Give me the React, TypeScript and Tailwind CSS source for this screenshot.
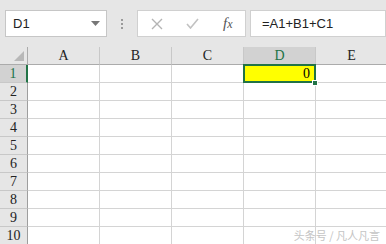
const cols = ['A', 'B', 'C', 'D', 'E']
const rows = [1, 2, 3, 4, 5, 6, 7, 8, 9, 10]

const headFont = { fontFamily: '"Liberation Serif", "Times New Roman", serif' }
const sans = { fontFamily: '"Liberation Sans", Arial, sans-serif' }

function FormulaBar() {
  return (
    <div className="h-[47px] bg-[#e6e6e6] flex items-start pt-[10px] pl-[5px]">
      {/* Name box */}
      <div className="w-[102px] h-[27px] bg-white border border-[#c6c6c6] flex items-center justify-between pl-[7px] pr-[6px]">
        <span className="text-[13px] text-[#222]" style={sans}>
          D1
        </span>
        <svg width="9" height="5" viewBox="0 0 9 5">
          <path d="M0 0 L9 0 L4.5 5 Z" fill="#777" />
        </svg>
      </div>

      {/* Grip dots */}
      <div className="w-[30px] h-[27px] flex flex-col items-center justify-center gap-[2px]">
        <span className="w-[2px] h-[2px] bg-[#9a9a9a]" />
        <span className="w-[2px] h-[2px] bg-[#9a9a9a]" />
        <span className="w-[2px] h-[2px] bg-[#9a9a9a]" />
      </div>

      {/* Cancel / enter / fx */}
      <div className="w-[109px] h-[27px] bg-white border border-[#d0d0d0] flex items-center pl-[12px]">
        <svg width="14" height="12" viewBox="0 0 14 12">
          <path d="M2 1 L12 11 M12 1 L2 11" stroke="#b4b4b4" strokeWidth="1.4" fill="none" />
        </svg>
        <svg className="ml-[22px]" width="13" height="11" viewBox="0 0 13 11">
          <path d="M1 6 L4.5 10 L12 1" stroke="#c2c2c2" strokeWidth="1.6" fill="none" />
        </svg>
        <span className="ml-[24px] text-[15px] italic text-[#555] leading-none" style={headFont}>
          f<span className="text-[12px]">x</span>
        </span>
      </div>

      {/* Formula input */}
      <div className="ml-[4px] flex-1 h-[27px] bg-white border border-[#d0d0d0] flex items-center pl-[11px]">
        <span className="text-[13px] text-[#222]" style={sans}>
          =A1+B1+C1
        </span>
      </div>
    </div>
  )
}

function Row({ r }: { r: number }) {
  const sel = r === 1
  return (
    <>
      <div
        className={`h-[18px] border-b flex items-center justify-center text-[14px] ${
          sel
            ? 'bg-[#d2d2d2] text-[#217346] border-r-2 border-r-[#217346] border-b-[#c8c8c8]'
            : 'bg-[#e6e6e6] text-[#222] border-r border-r-[#9e9e9e] border-b-[#c8c8c8]'
        }`}
      >
        {r}
      </div>
      {cols.map((c) => {
        const active = sel && c === 'D'
        return (
          <div
            key={c}
            className={`h-[18px] border-r border-b border-[#d4d4d4] relative ${active ? 'bg-[#ffff00] z-10' : 'bg-white'}`}
          >
            {active && (
              <>
                <span className="absolute right-[5px] top-0 h-full flex items-center text-[14px] text-black">0</span>
                <div className="absolute -top-[1px] -left-[1px] -right-[1px] -bottom-[1px] border-2 border-[#217346]" />
                <div className="absolute -right-[3px] -bottom-[4px] w-[6px] h-[6px] bg-[#217346] border border-white" />
              </>
            )}
          </div>
        )
      })}
    </>
  )
}

function Grid() {
  return (
    <div className="grid grid-cols-[28px_72px_72px_72px_72px_72px] w-[388px]" style={headFont}>
      {/* Corner */}
      <div className="h-[18px] bg-[#e6e6e6] border-r border-b border-[#ababab] flex items-end justify-end pr-[3px] pb-[3px]">
        <svg width="10" height="10" viewBox="0 0 10 10">
          <path d="M10 0 L10 10 L0 10 Z" fill="#b8b8b8" />
        </svg>
      </div>
      {cols.map((c) => (
        <div
          key={c}
          className={`h-[18px] border-b border-r border-b-[#ababab] border-r-[#c8c8c8] flex items-center justify-center text-[14px] ${
            c === 'D' ? 'bg-[#d2d2d2] text-[#217346]' : 'bg-[#e6e6e6] text-[#222]'
          }`}
        >
          {c}
        </div>
      ))}

      {rows.map((r) => (
        <Row key={r} r={r} />
      ))}
    </div>
  )
}

export default function App() {
  return (
    <div className="w-[386px] h-[244px] overflow-hidden bg-white relative">
      <FormulaBar />
      <Grid />
      {/* Watermark */}
      <div
        className="absolute right-[6px] bottom-[1px] z-20 text-[11px] text-[#c4c4c4]"
        style={{ fontFamily: '"Noto Sans CJK SC", sans-serif' }}
      >
        头条号 / 凡人凡言
      </div>
    </div>
  )
}
